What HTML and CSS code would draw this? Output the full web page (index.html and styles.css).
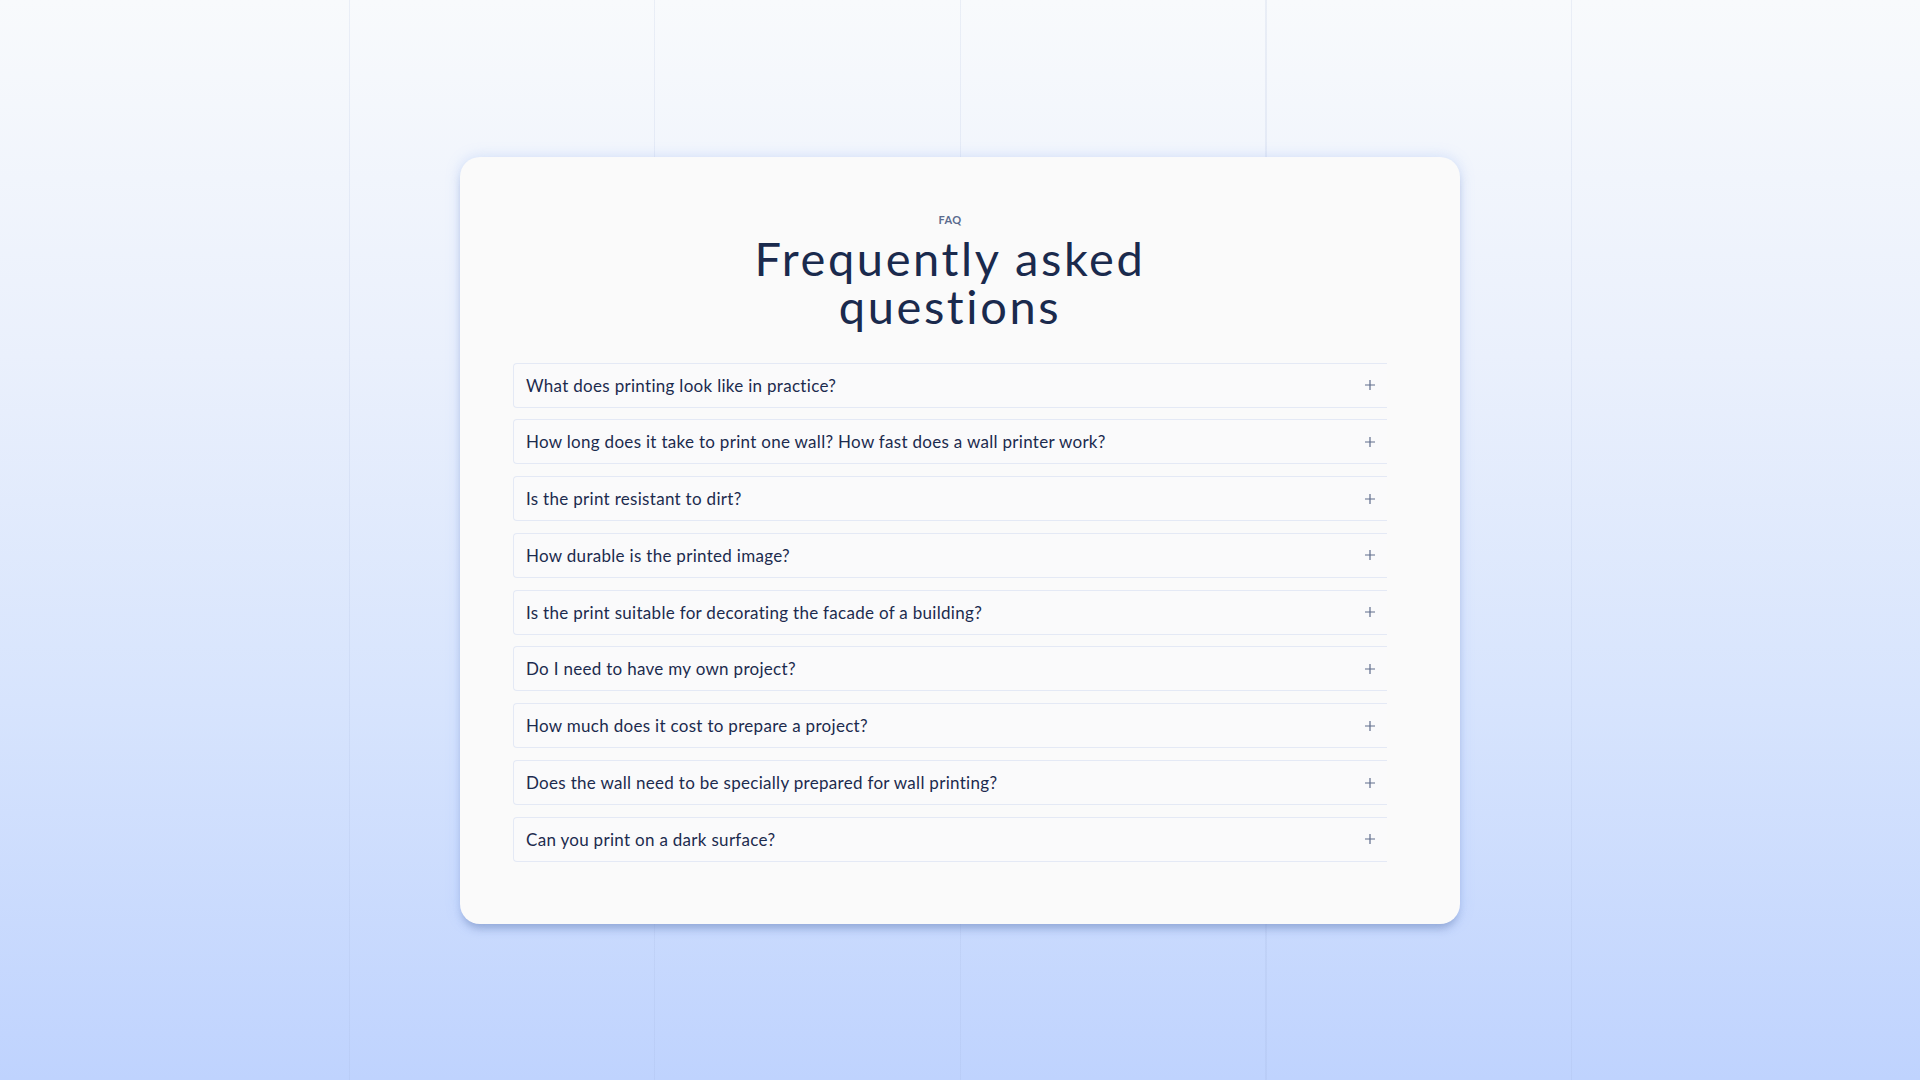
FILE: index.html
```html
<!DOCTYPE html>
<html lang="en">
<head>
<meta charset="utf-8">
<title>FAQ</title>
<link rel="stylesheet" href="styles.css">
</head>
<body>
<main class="page">
  <section class="card">
    <p class="eyebrow">FAQ</p>
    <h1 class="title">Frequently asked<br>questions</h1>
    <div class="list">
      <div class="item"><span class="q">What does printing look like in practice?</span><svg class="plus" viewBox="0 0 10 10"><path d="M5 0v10M0 5h10"/></svg></div>
      <div class="item"><span class="q">How long does it take to print one wall? How fast does a wall printer work?</span><svg class="plus" viewBox="0 0 10 10"><path d="M5 0v10M0 5h10"/></svg></div>
      <div class="item"><span class="q">Is the print resistant to dirt?</span><svg class="plus" viewBox="0 0 10 10"><path d="M5 0v10M0 5h10"/></svg></div>
      <div class="item"><span class="q">How durable is the printed image?</span><svg class="plus" viewBox="0 0 10 10"><path d="M5 0v10M0 5h10"/></svg></div>
      <div class="item"><span class="q">Is the print suitable for decorating the facade of a building?</span><svg class="plus" viewBox="0 0 10 10"><path d="M5 0v10M0 5h10"/></svg></div>
      <div class="item"><span class="q">Do I need to have my own project?</span><svg class="plus" viewBox="0 0 10 10"><path d="M5 0v10M0 5h10"/></svg></div>
      <div class="item"><span class="q">How much does it cost to prepare a project?</span><svg class="plus" viewBox="0 0 10 10"><path d="M5 0v10M0 5h10"/></svg></div>
      <div class="item"><span class="q">Does the wall need to be specially prepared for wall printing?</span><svg class="plus" viewBox="0 0 10 10"><path d="M5 0v10M0 5h10"/></svg></div>
      <div class="item"><span class="q">Can you print on a dark surface?</span><svg class="plus" viewBox="0 0 10 10"><path d="M5 0v10M0 5h10"/></svg></div>
    </div>
  </section>
</main>
</body>
</html>
```
FILE: styles.css
```css
* { box-sizing: border-box; }
html, body { margin: 0; padding: 0; }
body {
  font-family: "Lato", "Liberation Sans", sans-serif;
  height: 100vh;
  background:
    repeating-linear-gradient(90deg, rgba(150, 168, 210, 0.15) 0 1px, transparent 1px 305.5px) center top / 1223px 100% no-repeat,
    linear-gradient(180deg, #f8fafc 0%, #eaf0fc 33%, #d7e4fd 65%, #bfd3fe 100%);
}
.page {
  height: 100vh;
  display: flex;
  align-items: center;
  justify-content: center;
}
.card {
  width: 1000px;
  height: 767px;
  background: #fafafa;
  border-radius: 20px;
  padding: 55px 73px 60px 53px;
  box-shadow:
    0 0 14px rgba(140, 175, 245, 0.35),
    0 7px 8px -3px rgba(60, 85, 140, 0.38);
}
.eyebrow {
  margin: 0;
  text-align: center;
  font-size: 11px;
  line-height: 16px;
  font-weight: 700;
  color: #5b6b8e;
  letter-spacing: 0.3px;
}
.title {
  margin: 6px 0 0;
  text-align: center;
  font-size: 47px;
  line-height: 48px;
  font-weight: 400;
  color: #1a2a4d;
  letter-spacing: 2.6px;
}
.list {
  margin-top: 33px;
  display: flex;
  flex-direction: column;
  gap: 11.8px;
}
.item {
  height: 45px;
  display: flex;
  align-items: center;
  justify-content: space-between;
  padding: 0 12px 0 12px;
  border: 1px solid #e4e9f5;
  border-right: none;
  border-radius: 4px 0 0 4px;
  background: #fafafb;
}
.q {
  font-size: 17px;
  color: #1c2b4e;
  letter-spacing: 0.3px;
}
.plus {
  width: 10px;
  height: 10px;
  stroke: #5f6d8c;
  stroke-width: 1.2;
  fill: none;
}
```
